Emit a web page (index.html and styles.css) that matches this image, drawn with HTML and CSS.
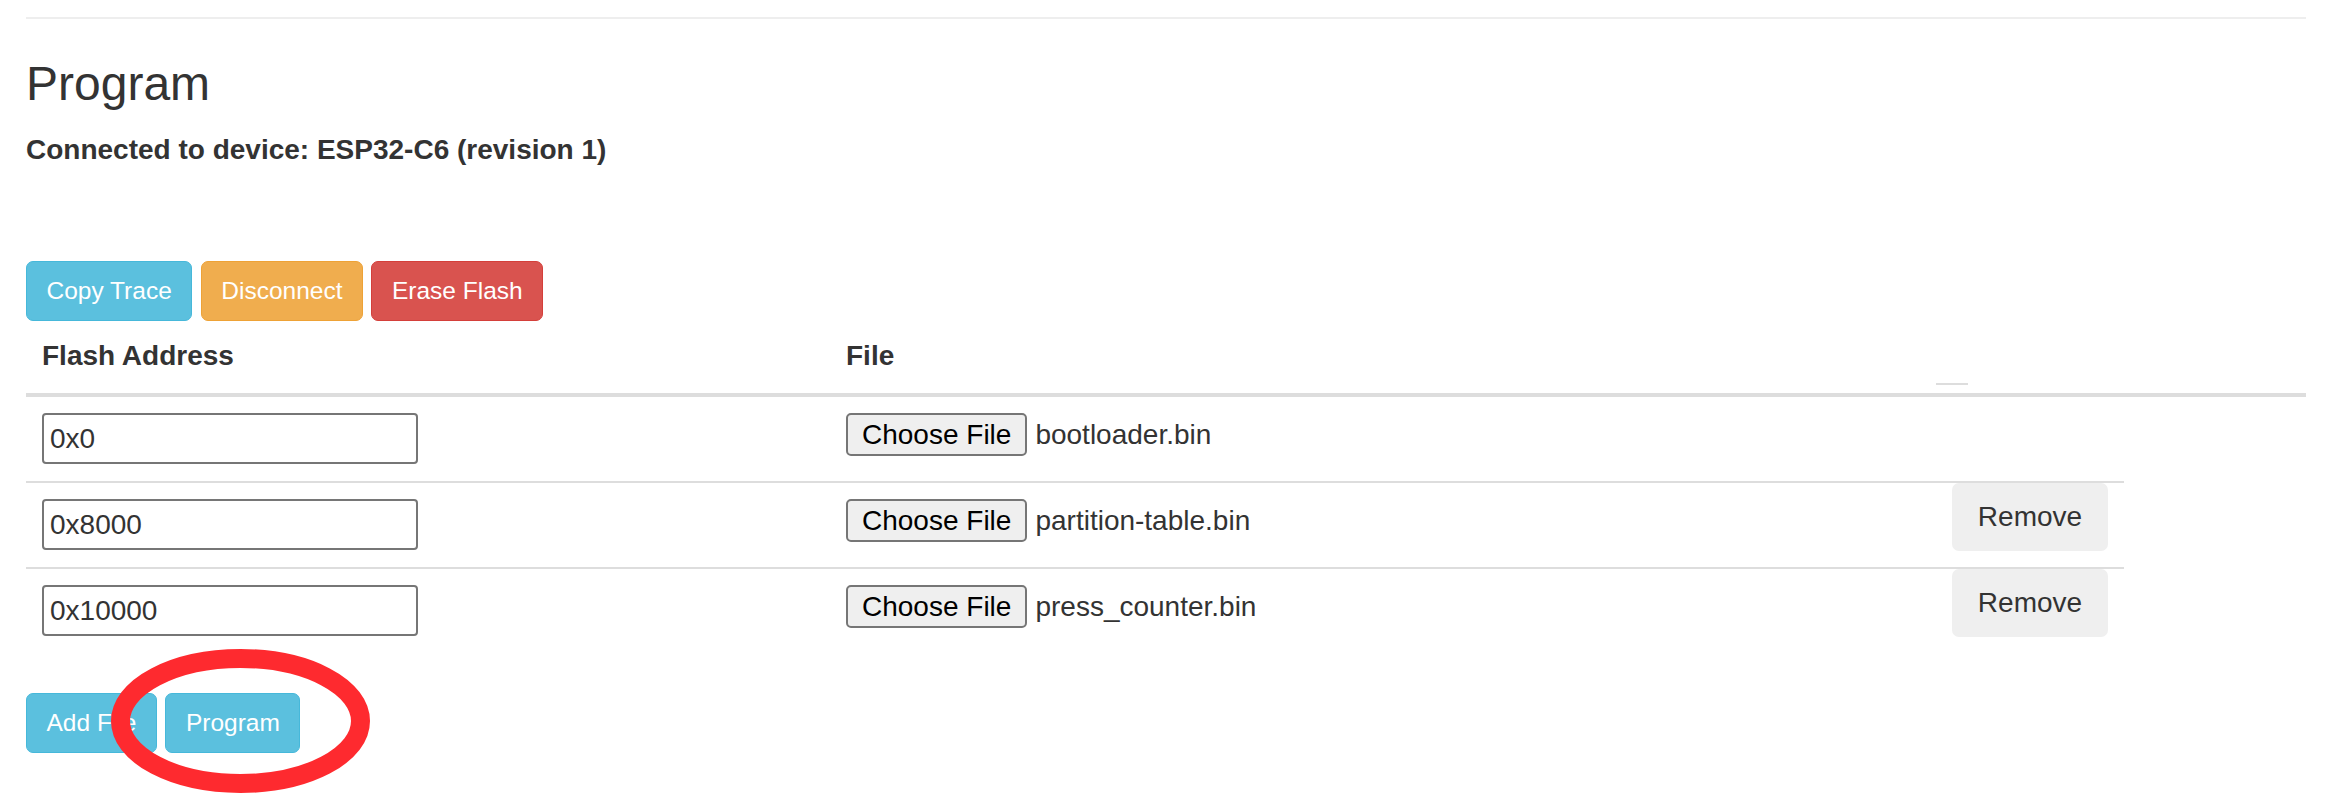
FILE: index.html
```html
<!DOCTYPE html>
<html lang="en">
<head>
<meta charset="utf-8">
<title>Program</title>
<link rel="stylesheet" href="styles.css">
</head>
<body>
<div class="page">
  <hr class="rule">
  <h2 class="title">Program</h2>
  <h5 class="status">Connected to device: ESP32-C6 (revision 1)</h5>
  <div class="toolbar">
    <button class="btn btn-info">Copy Trace</button>
    <button class="btn btn-warning">Disconnect</button>
    <button class="btn btn-danger">Erase Flash</button>
  </div>
  <table class="files">
    <colgroup>
      <col class="c-addr">
      <col class="c-file">
      <col class="c-act">
      <col class="c-extra">
    </colgroup>
    <thead>
      <tr>
        <th>Flash Address</th>
        <th>File</th>
        <th class="th-dash"><span class="dash"></span></th>
        <th class="th-empty"></th>
      </tr>
    </thead>
    <tbody>
      <tr>
        <td><input class="addr" type="text" value="0x0"></td>
        <td><span class="file"><button class="choose">Choose File</button><span class="fname">bootloader.bin</span></span></td>
        <td class="act"></td>
      </tr>
      <tr>
        <td><input class="addr" type="text" value="0x8000"></td>
        <td><span class="file"><button class="choose">Choose File</button><span class="fname">partition-table.bin</span></span></td>
        <td class="act"><button class="remove">Remove</button></td>
      </tr>
      <tr>
        <td><input class="addr" type="text" value="0x10000"></td>
        <td><span class="file"><button class="choose">Choose File</button><span class="fname">press_counter.bin</span></span></td>
        <td class="act"><button class="remove">Remove</button></td>
      </tr>
    </tbody>
  </table>
  <div class="actions">
    <button class="btn btn-info">Add File</button>
    <button class="btn btn-info">Program</button>
    <svg class="mark" width="259" height="144" viewBox="0 0 259 144" aria-hidden="true">
      <ellipse cx="129.5" cy="72" rx="120" ry="62.5" fill="none" stroke="#fe2a2f" stroke-width="19"/>
    </svg>
  </div>
</div>
</body>
</html>
```
FILE: styles.css
```css
html, body {
  margin: 0;
  padding: 0;
  background: #ffffff;
}

body {
  font-family: "Liberation Sans", Arial, sans-serif;
  color: #333333;
}

.page {
  width: 2280px;
  padding: 17px 39px 46px 26px;
}

.rule {
  margin: 0;
  height: 0;
  border: 0;
  border-top: 2px solid #eeeeee;
}

.title {
  margin: 39px 0 0;
  font-size: 48px;
  line-height: 52px;
  font-weight: 400;
  color: #333333;
}

.status {
  margin: 20px 0 0;
  font-size: 28px;
  line-height: 40px;
  font-weight: 700;
  color: #333333;
}

.toolbar {
  margin-top: 91px;
  display: flex;
  gap: 8.5px;
}

.btn {
  box-sizing: border-box;
  height: 60px;
  padding: 0 19.5px;
  border: 1px solid transparent;
  border-radius: 7px;
  font-family: "Liberation Sans", Arial, sans-serif;
  font-size: 24.5px;
  line-height: 58px;
  color: #ffffff;
  cursor: pointer;
}

.btn-info {
  background: #5bc0de;
  border-color: #46b8da;
}

.btn-warning {
  background: #f0ad4e;
  border-color: #eea236;
}

.btn-danger {
  background: #d9534f;
  border-color: #d43f3a;
}

.files {
  width: 2280px;
  table-layout: fixed;
  border-collapse: separate;
  border-spacing: 0;
}

.c-addr { width: 804px; }
.c-file { width: 1106px; }
.c-act { width: 188px; }
.c-extra { width: 182px; }

.files th {
  padding: 15px 16px 17px;
  font-size: 28px;
  line-height: 40px;
  font-weight: 700;
  text-align: left;
  vertical-align: bottom;
  border-bottom: 4px solid #dddddd;
  color: #333333;
}

.files th.th-dash,
.files th.th-empty {
  padding: 0;
}

.dash {
  display: block;
  width: 32px;
  height: 2px;
  margin-bottom: 8px;
  background: #dddddd;
}

.files td {
  padding: 16px 16px 17px;
  vertical-align: top;
  font-size: 28px;
  line-height: 40px;
}

.files tbody tr + tr td {
  border-top: 2px solid #dddddd;
}

.files td.act {
  padding: 0;
  text-align: center;
}

.addr {
  box-sizing: border-box;
  display: block;
  width: 376px;
  height: 51px;
  margin: 0;
  padding: 0 6px;
  border: 2px solid #767676;
  border-radius: 4px;
  font-family: "Liberation Sans", Arial, sans-serif;
  font-size: 28px;
  color: #333333;
  background: #ffffff;
}

.file {
  display: flex;
  align-items: baseline;
}

.choose {
  box-sizing: border-box;
  height: 43px;
  margin: 0;
  padding: 0 14px;
  border: 2px solid #767676;
  border-radius: 5px;
  background: #efefef;
  font-family: "Liberation Sans", Arial, sans-serif;
  font-size: 28px;
  line-height: 39px;
  color: #000000;
}

.fname {
  margin-left: 8px;
  font-size: 28px;
  color: #333333;
}

.remove {
  box-sizing: border-box;
  width: 156px;
  height: 68px;
  margin: 0;
  padding: 0;
  border: 0;
  border-radius: 7px;
  background: #efefef;
  font-family: "Liberation Sans", Arial, sans-serif;
  font-size: 28px;
  line-height: 68px;
  color: #333333;
}

.actions {
  position: relative;
  margin-top: 40px;
  display: flex;
  gap: 8.5px;
}

.mark {
  position: absolute;
  left: 85px;
  top: -44px;
  pointer-events: none;
}
```
